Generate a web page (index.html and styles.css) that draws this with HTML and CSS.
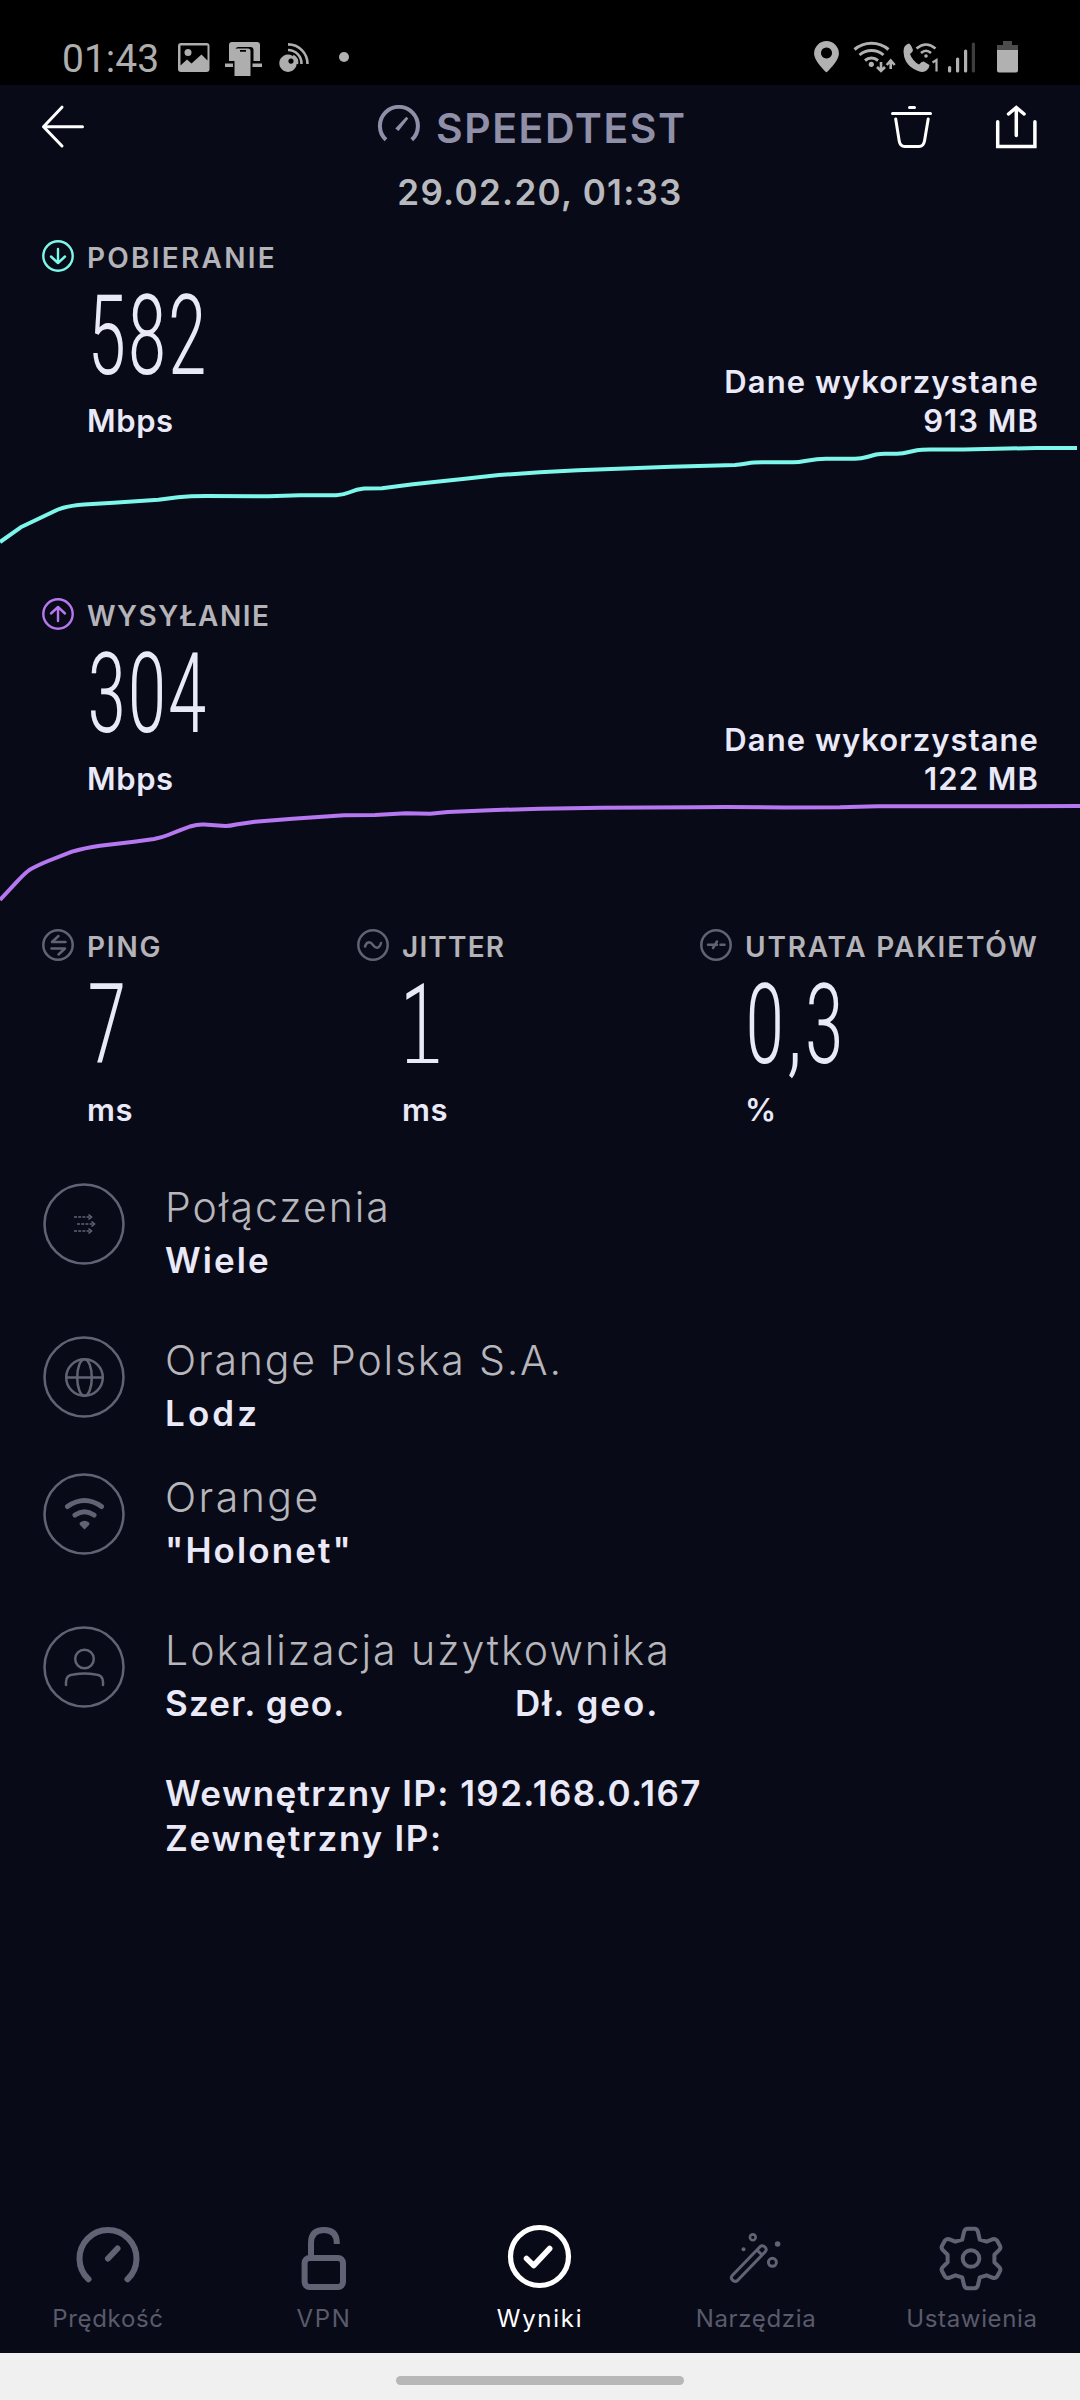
FILE: index.html
```html
<!DOCTYPE html>
<html lang="pl">
<head>
<meta charset="utf-8">
<title>Speedtest</title>
<link rel="stylesheet" href="styles.css">
</head>
<body>
<div class="screen">
  <div class="status">
    <div class="status-left">
      <span class="clock">01:43</span>
      <svg class="st-gallery" width="32" height="30" viewBox="178 43 32 30"><path fill="#aeaeae" fill-rule="evenodd" d="M181 43h25.500a3 3 0 0 1 3 3v23a3 3 0 0 1-3 3H181a3 3 0 0 1-3-3V46a3 3 0 0 1 3-3zM180.500 45.500v20l6.500-6 4.500 4 10-9 6 6V45.500z"/><circle cx="188" cy="52.500" r="3.500" fill="#aeaeae"/></svg>
      <svg class="st-phone" width="38" height="36" viewBox="225 41 38 36"><g fill="#aeaeae"><path d="M229 61V45q0-3 3-3h25q3 0 3 3v16h-6.500V50q0-3-3-3h-12q-3 0-3 3v11z"/><path d="M225 63.500h8v3.500h-8zM252.500 63.500h9.500v3.500h-9.500z"/><path fill-rule="evenodd" d="M237 48.500h11q2.500 0 2.500 2.500v25h-16V51q0-2.500 2.500-2.500zM240 50v1.800h6V50z"/></g></svg>
      <svg class="st-cast" width="31" height="31" viewBox="279 42 31 31"><path fill="#aeaeae" fill-rule="evenodd" d="M288 54.500a8.700 8.700 0 1 0 .01 0zM291 58.500a2.600 2.600 0 1 1-.01 0z"/><path fill="none" stroke="#aeaeae" stroke-width="2.600" d="M288 44.400A19.400 19.400 0 0 1 307.500 64M288 50a13.500 13.500 0 0 1 13.500 14M293 56a8 8 0 0 1 4 8"/></svg>
      <span class="st-dot"></span>
    </div>
    <div class="status-right">
      <svg width="26" height="32" viewBox="815 41 26 32"><path fill="#b1b1b1" fill-rule="evenodd" d="M827.500 41a12.400 12.400 0 0 1 12.400 12.400c0 8-12.400 19-12.400 19s-12.400-11-12.400-19A12.400 12.400 0 0 1 827.500 41zM827.500 47.500a5.500 5.500 0 1 0 .01 0z"/></svg>
      <svg class="st-wifi" width="43" height="33" viewBox="854 40 43 33"><g fill="none" stroke="#b1b1b1" stroke-width="3"><path d="M855.500 49.500a26 26 0 0 1 34 0M860.500 55a18 18 0 0 1 24 0M866 60.500a10 10 0 0 1 13 0"/><path stroke-width="2.600" d="M882 62v9M878 67l4 4 4-4M891.700 69v-8M887.700 65l4-4.500 4 4.500"/></g><circle cx="872.300" cy="64.300" r="2.600" fill="#b1b1b1"/></svg>
      <svg class="st-call" width="37" height="33" viewBox="904 41 37 33"><path fill="#b1b1b1" d="M905 48q1-3.500 5-4.500 1.500 0 4 6.500 0 2-3 4 2.500 7 9 10.500 3.500-4 5.500-2.500l5 3q0 3-3 5.500-3 2.500-8.500.500-8-3-12-9.500-3.500-7-2-13.500z"/><g fill="none" stroke="#b1b1b1" stroke-width="2.600"><path d="M917.500 48.500q9.500-8 19 0M922 53q5-4.500 10 0"/></g><circle cx="927" cy="56" r="1.800" fill="#b1b1b1"/><path d="M933.500 62.500l4-2.500v11.500" fill="none" stroke="#b1b1b1" stroke-width="2.200"/></svg>
      <svg class="st-signal" width="28" height="31" viewBox="949 42 28 31"><g fill="#b1b1b1"><rect x="949" y="66" width="3.200" height="6.500" rx="1.500"/><rect x="957" y="57.500" width="3.200" height="15" rx="1.500"/><rect x="965" y="49.500" width="3.200" height="23" rx="1.500"/><rect x="972.800" y="42.500" width="3.200" height="30" rx="1.500" opacity=".35"/></g></svg>
      <svg class="st-battery" width="22" height="33" viewBox="998 41 22 33"><path fill="#4c4c4c" d="M1004 41h9v4h6v5h-21v-5h6z"/><path fill="#b1b1b1" d="M998 50h21v20.500q0 2-2 2h-17q-2 0-2-2z"/></svg>
    </div>
  </div>

  <div class="header">
    <svg width="44" height="44" viewBox="41 105 44 44"><path class="line" d="M62 107.200L43.500 126.700 62 146M43.500 126.700h39"/></svg>
    <div class="brand">
      <svg width="44" height="44" viewBox="377 105 44 44"><path d="M386 139.800A19 19 0 1 1 411.800 139.800" fill="none" stroke="#908fa8" stroke-width="4"/><path fill="#908fa8" d="M395.300 128.500l11-11.800 2 1.800-9.800 12.500z"/></svg>
      <span class="brand-name">SPEEDTEST</span>
    </div>
    <svg class="trash" width="44" height="44" viewBox="890 105 44 44"><path class="line" d="M892.500 113.400h38M909.500 107.500h5M895.700 119l3.500 22q1 5.500 5.500 5.500h14.300q4.500 0 5.500-5.500l3.700-22"/></svg>
    <svg width="44" height="44" viewBox="995 105 44 44"><path class="line share" d="M997.700 121.700v24.800h37.200v-24.800M1016.300 135.500v-27M1008.500 114l7.800-6.500 7.800 6.500"/></svg>
  </div>
  <div class="date">29.02.20, 01:33</div>

  <section class="speed">
    <div class="label"><svg width="32" height="32" viewBox="0 0 32 32"><g fill="none" stroke="#7df6eb" stroke-width="2.400" stroke-linecap="round" stroke-linejoin="round"><circle cx="16" cy="16" r="14.700"/><path d="M16 9v14M9 16.500l7 6.500 7-6.500"/></g></svg><span class="wide">POBIERANIE</span></div>
    <div class="reading">
      <div class="value"><div class="digits">582</div><div class="unit">Mbps</div></div>
      <div class="used">Dane wykorzystane<br>913 MB</div>
    </div>
    <svg class="chart" width="1080" height="134" viewBox="0 440 1080 134"><path stroke="#7df6eb" d="M0 542L20.700 527.300 39.600 518.300 58 509.500Q68 505.700 84 504.500L113.600 502.700 158.400 499.700 178 497.200Q190 496 206.600 496L268.600 496.300 299.600 495.300H336Q343 495 349 492.500Q357 489 364 488.600L382 488.300 413 484.300 465 478.700 499 475 540 472.300 578 470.300 671 466.700 735 464.900Q742 464.500 748 463.300 753 462.300 762 462.300H793Q799 462.300 805 461L817 459.200Q821 458.700 826 458.700H855Q861 458.700 867 457L876 454.500Q880 453.700 885 453.700H897Q903 453.700 909 452L917 450.300Q921 449.600 930 449.600L963.500 449.500 1036 448H1077"/></svg>
  </section>

  <section class="speed">
    <div class="label"><svg width="32" height="32" viewBox="0 0 32 32"><g fill="none" stroke="#b678f0" stroke-width="2.400" stroke-linecap="round" stroke-linejoin="round"><circle cx="16" cy="16" r="14.700"/><path d="M16 23V9M9 15.500L16 9l7 6.500"/></g></svg><span class="upload-name">WYSYŁANIE</span></div>
    <div class="reading">
      <div class="value"><div class="digits">304</div><div class="unit">Mbps</div></div>
      <div class="used">Dane wykorzystane<br>122 MB</div>
    </div>
    <svg class="chart" width="1080" height="106" viewBox="0 798 1080 106"><path stroke="#b678f0" d="M0 900L17 881.700Q24 874 29.300 870 36 866 48 861L72 851.700Q84 848 100 845.700L134 841.700 154 839Q162 837.500 168 835L179 830.700 190 826.500Q198 824.200 204 824.600L225.500 826Q230 826 236 824.500L255 821.700 292.700 818.700 344 815.300 375 815 406 813.300 430 813.700 448 812 496 810 540 808.700 602 807.700 695 807.300 726 807 784.500 807.500 840 807.300 877.500 806.200H960L1005 806.300 1080 806"/></svg>
  </section>

  <section class="metrics">
    <div class="metric">
      <div class="label"><svg width="32" height="32" viewBox="0 0 32 32"><g class="dim"><circle cx="16" cy="16" r="14.700"/><path d="M10 13h13.500M10 13l6.500-6M9.500 19.500H23l-6.500 6"/></g></svg><span>PING</span></div>
      <div class="value"><div class="digits">7</div><div class="unit">ms</div></div>
    </div>
    <div class="metric">
      <div class="label"><svg width="32" height="32" viewBox="0 0 32 32"><g class="dim"><circle cx="16" cy="16" r="14.700"/><path d="M8 17.500c2-6 5.500-5 8-1.500s6 4.500 8-2"/></g></svg><span class="jitter-name">JITTER</span></div>
      <div class="value"><div class="digits footed">1</div><div class="unit">ms</div></div>
    </div>
    <div class="metric">
      <div class="label"><svg width="32" height="32" viewBox="0 0 32 32"><g class="dim"><circle cx="16" cy="16" r="14.700"/><path d="M8 15.700h6.500M13 19l4-6.500M15 15.700h2M20.500 15.700h4"/></g></svg><span>UTRATA PAKIETÓW</span></div>
      <div class="value"><div class="digits loose">0,3</div><div class="unit">%</div></div>
    </div>
  </section>

  <section class="details">
    <div class="detail">
      <svg width="82" height="82" viewBox="0 0 82 82"><g class="dim"><circle cx="41" cy="41" r="39.500"/></g><g fill="none" stroke="#626275" stroke-width="1.600"><path stroke-dasharray="3 1.200" d="M31 34h17M34 41h17M31 48h17"/><path d="M45.500 31.500l3 2.500-3 2.500M48.500 38.500l3 2.500-3 2.500M45.500 45.500l3 2.500-3 2.500"/></g></svg>
      <div><div class="d-title">Połączenia</div><div class="d-sub loose">Wiele</div></div>
    </div>
    <div class="detail short">
      <svg width="82" height="82" viewBox="0 0 82 82"><g class="dim"><circle cx="41" cy="41" r="39.500"/><circle cx="41.500" cy="41.500" r="18.300"/><ellipse cx="41.500" cy="41.500" rx="7.300" ry="18.300"/><path d="M23.500 41.500h36"/></g></svg>
      <div><div class="d-title tight">Orange Polska S.A.</div><div class="d-sub looser">Lodz</div></div>
    </div>
    <div class="detail">
      <svg width="82" height="82" viewBox="0 0 82 82"><g class="dim"><circle cx="41" cy="41" r="39.500"/><path stroke-width="5" d="M24.500 33.500q17-12 34 0M32 42q9.500-6.500 19 0"/></g><path fill="#626275" d="M37 49.500q4.500-3.500 9 0 1 1.500-.500 3l-4 4-4-4q-1.500-1.500-.500-3z"/></svg>
      <div><div class="d-title loose">Orange</div><div class="d-sub loose">"Holonet"</div></div>
    </div>
    <div class="detail last">
      <svg width="82" height="82" viewBox="0 0 82 82"><g class="dim"><circle cx="41" cy="41" r="39.500"/><circle cx="41.500" cy="33" r="9.300"/><path d="M23 59v-3q0-7 7.500-7.500 11-2 22 0Q60 49 60 56v3"/></g></svg>
      <div>
        <div class="d-title">Lokalizacja użytkownika</div>
        <div class="d-sub coords"><span>Szer. geo.</span><span class="lon">Dł. geo.</span></div>
        <div class="d-sub ips"><div>Wewnętrzny IP: 192.168.0.167</div><div class="outer-ip">Zewnętrzny IP:</div></div>
      </div>
    </div>
  </section>

  <nav class="tabs">
    <div class="tab"><svg width="68" height="68" viewBox="-34 -34.500 68 68"><path d="M-19.500 20.800A28.500 28.500 0 1 1 19.500 20.800M0 0L9.500-10" stroke-width="6"/></svg><span>Prędkość</span></div>
    <div class="tab"><svg width="68" height="68" viewBox="290 2224 68 68"><path d="M311 2257v-14q0-13 12.900-13t12.900 13v1" stroke-width="6" stroke-linecap="butt"/><rect x="304.600" y="2258" width="38.400" height="29" rx="5" stroke-width="6"/></svg><span class="loose">VPN</span></div>
    <div class="tab active"><svg width="68" height="68" viewBox="506 2224 68 68"><circle cx="539.500" cy="2256.500" r="29" stroke-width="5.200"/><path d="M526.500 2258.500l7.200 7 16-17" stroke-width="5.500"/></svg><span class="loose">Wyniki</span></div>
    <div class="tab"><svg width="68" height="68" viewBox="722 2224 68 68"><g stroke-width="3"><path d="M732.500 2275.200l27.500-28.500q2.500-2 5 .300t0 5l-27.500 28.500q-2.500 2-5-.300t0-5zM757 2250l5 5"/><circle cx="752.800" cy="2237.300" r="2.900" stroke-width="2.600"/><circle cx="772.400" cy="2262.300" r="4"/></g><g class="dots"><circle cx="777.600" cy="2244" r="2.800"/><circle cx="743.500" cy="2249.300" r="2"/></g></svg><span>Narzędzia</span></div>
    <div class="tab"><svg width="68" height="68" viewBox="-33 -34.500 68 68"><g stroke-width="4"><circle r="8.300"/><path d="M-8.800-18.800L-7-26.500Q-6.300-29.700-3.500-29.700H3.500Q6.300-29.700 7-26.500L8.800-18.800 15.600-16.800 22-19.300Q24.500-20 26.200-17.700L28.800-13Q30.200-10.500 28.300-8.600L23.400-3.800V3.800L28.300 8.600Q30.200 10.500 28.800 13L26.200 17.700Q24.500 20 22 19.300L15.600 16.800 8.800 18.800 7 26.500Q6.300 29.700 3.500 29.700H-3.500Q-6.300 29.700-7 26.500L-8.800 18.800-15.600 16.800-22 19.300Q-24.500 20-26.200 17.700L-28.800 13Q-30.200 10.500-28.300 8.600L-23.400 3.800V-3.800L-28.300-8.600Q-30.200-10.500-28.800-13L-26.200-17.700Q-24.500-20-22-19.300L-15.600-16.800z"/></g></svg><span>Ustawienia</span></div>
  </nav>
  <div class="gesture"><span class="pill"></span></div>
</div>
</body>
</html>
```
FILE: styles.css
```css
* { box-sizing: border-box; }
body {
  margin: 0;
  background: #090a18;
  color: #e9e9f8;
  font-family: Inter, "Liberation Sans", sans-serif;
  font-weight: 600;
}
svg { display: block; flex: none; }
.screen { display: flex; flex-direction: column; width: 1080px; height: 2400px; overflow: hidden; }

.status { display: flex; justify-content: space-between; height: 85px; background: #000; padding: 40px 61px 0 62px; }
.status-left, .status-right { display: flex; align-items: flex-start; }
.clock { width: 98px; font: 400 39px/38px Roboto, sans-serif; color: #aeaeae; }
.st-gallery { margin: 3px 0 0 18px; }
.st-phone { margin: 1px 0 0 15px; }
.st-cast { margin: 2px 0 0 16px; }
.st-dot { width: 10px; height: 10px; margin: 12px 0 0 29px; border-radius: 50%; background: #b1b1b1; }
.status-right { padding-top: 1px; }
.st-wifi { margin: -1px 0 0 13px; }
.st-call { margin-left: 7px; }
.st-signal { margin: 1px 0 0 8px; }
.st-battery { margin-left: 21px; }

.header { display: flex; align-items: center; height: 83px; padding: 1px 41px 0; }
.brand { display: flex; align-items: center; gap: 15px; margin-left: 292px; color: #908fa8; }
.brand-name { padding-top: 2px; font-size: 41px; line-height: 44px; letter-spacing: 1.54px; }
.trash { margin: 0 61px 0 auto; }
.line { fill: none; stroke: #fff; stroke-width: 3; stroke-linecap: round; stroke-linejoin: round; }
.share { stroke-width: 3.5; stroke-linejoin: miter; }
.date { height: 48px; font-size: 35px; line-height: 48px; letter-spacing: 1.27px; text-align: center; color: #b8b9be; }

.speed { padding-top: 24px; }
.label { display: flex; gap: 13px; height: 36px; font-size: 28px; line-height: 36px; letter-spacing: 1.8px; color: #b3b3b8; white-space: nowrap; }
.speed .label { padding-left: 42px; }
.label .wide { letter-spacing: 2.25px; }
.label .upload-name { letter-spacing: 1.51px; }
.label .jitter-name { letter-spacing: 1.18px; }
.reading { display: flex; justify-content: space-between; align-items: flex-end; padding: 0 41px 0 42px; }
.value { padding-left: 45px; }
.digits {
  position: relative;
  width: 160px;
  height: 125px;
  font: 300 112px/119px Roboto, sans-serif;
  font-stretch: 75%;
  letter-spacing: 1px;
  transform: scaleX(.725);
  transform-origin: 0 50%;
}
.digits.loose { letter-spacing: 3px; }
/* Foot serif under the numeral one */
.digits.footed { text-indent: -3px; }
.digits.footed::after { content: ""; position: absolute; left: 7px; top: 94px; width: 43px; height: 4px; background: currentColor; }
.unit, .used { font-size: 31px; line-height: 39px; letter-spacing: 1.05px; }
.unit { letter-spacing: .6px; }
.used { text-align: right; }
.chart path { fill: none; stroke-width: 4; stroke-linejoin: round; }

.metrics { display: grid; grid-template-columns: 315px 343px auto; padding: 25px 0 0 42px; }
.dim { fill: none; stroke: #626275; stroke-width: 2.5; stroke-linecap: round; stroke-linejoin: round; }

.details { flex: 1; padding: 54px 0 0 43px; }
.detail { display: flex; gap: 40px; height: 153px; }
.detail.short { height: 137px; }
.detail.last { height: auto; }
.d-title { margin-bottom: 6px; font-size: 41px; line-height: 49px; font-weight: 300; letter-spacing: 2px; color: #b6b6bb; }
.d-title.loose { letter-spacing: 2.47px; }
.d-title.tight { letter-spacing: 1.8px; }
.d-sub { font-size: 35px; line-height: 45px; letter-spacing: 1.4px; }
.d-sub.loose { letter-spacing: 2.1px; }
.d-sub.looser { letter-spacing: 3.1px; }
.coords { display: grid; grid-template-columns: 350px auto; letter-spacing: 1.2px; }
.lon { letter-spacing: 1.95px; }
.ips { margin-top: 45px; }
.outer-ip { letter-spacing: 1.69px; }

.tabs { display: flex; height: 129px; }
.tab {
  display: flex;
  flex-direction: column;
  align-items: center;
  gap: 11px;
  width: 216px;
  color: #626275;
  font-size: 24px;
  line-height: 32px;
  font-weight: 400;
  letter-spacing: .65px;
}
.tab span { color: #5a5a6b; }
.tab .loose { letter-spacing: 1.7px; }
.tab svg { fill: none; stroke: currentColor; stroke-linecap: round; stroke-linejoin: round; }
.tab.active, .tab.active span { color: #fff; }
.dots { fill: currentColor; stroke: none; }
.gesture { display: flex; height: 47px; padding-top: 23px; justify-content: center; background: #f0f0f1; }
.pill { width: 288px; height: 9px; border-radius: 5px; background: #b7b7b7; }
```
